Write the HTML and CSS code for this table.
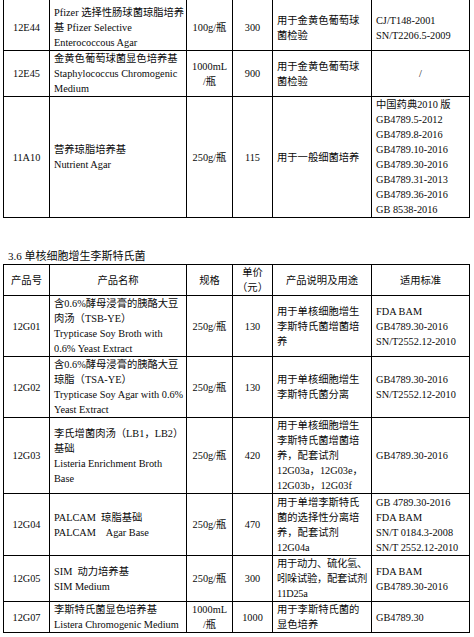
FILE: index.html
```html
<!DOCTYPE html>
<html lang="zh-CN">
<head>
<meta charset="utf-8">
<title>培养基目录</title>
<link rel="stylesheet" href="styles.css">
</head>
<body>
<div class="page">
  <table class="grid first">
    <colgroup>
      <col class="c-code"><col class="c-name"><col class="c-spec"><col class="c-price"><col class="c-desc"><col class="c-std">
    </colgroup>
    <tr class="lead">
      <td class="center">12E44</td>
      <td>Pfizer 选择性肠球菌琼脂培养<br>基 Pfizer Selective<br>Enterococcous Agar</td>
      <td class="center">100g/瓶</td>
      <td class="center">300</td>
      <td>用于金黄色葡萄球<br>菌检验</td>
      <td>CJ/T148-2001<br>SN/T2206.5-2009</td>
    </tr>
    <tr>
      <td class="center">12E45</td>
      <td>金黄色葡萄球菌显色培养基<br>Staphylococcus Chromogenic<br>Medium</td>
      <td class="center">1000mL<br>/瓶</td>
      <td class="center">900</td>
      <td>用于金黄色葡萄球<br>菌检验</td>
      <td class="center">/</td>
    </tr>
    <tr>
      <td class="center">11A10</td>
      <td>营养琼脂培养基<br>Nutrient Agar</td>
      <td class="center">250g/瓶</td>
      <td class="center">115</td>
      <td>用于一般细菌培养</td>
      <td>中国药典2010 版<br>GB4789.5-2012<br>GB4789.8-2016<br>GB4789.10-2016<br>GB4789.30-2016<br>GB4789.31-2013<br>GB4789.36-2016<br>GB 8538-2016</td>
    </tr>
  </table>

  <h2 class="section">3.6 单核细胞增生李斯特氏菌</h2>

  <table class="grid">
    <colgroup>
      <col class="c-code"><col class="c-name"><col class="c-spec"><col class="c-price"><col class="c-desc"><col class="c-std">
    </colgroup>
    <tr class="head">
      <th>产品号</th>
      <th>产品名称</th>
      <th>规格</th>
      <th>单价<br>（元）</th>
      <th>产品说明及用途</th>
      <th>适用标准</th>
    </tr>
    <tr>
      <td class="center">12G01</td>
      <td>含0.6%酵母浸膏的胰酪大豆<br>肉汤（TSB-YE）<br>Trypticase Soy Broth with<br>0.6% Yeast Extract</td>
      <td class="center">250g/瓶</td>
      <td class="center">130</td>
      <td>用于单核细胞增生<br>李斯特氏菌增菌培<br>养</td>
      <td>FDA BAM<br>GB4789.30-2016<br>SN/T2552.12-2010</td>
    </tr>
    <tr>
      <td class="center">12G02</td>
      <td>含0.6%酵母浸膏的胰酪大豆<br>琼脂（TSA-YE）<br>Trypticase Soy Agar with 0.6%<br>Yeast Extract</td>
      <td class="center">250g/瓶</td>
      <td class="center">130</td>
      <td>用于单核细胞增生<br>李斯特氏菌分离</td>
      <td>GB4789.30-2016<br>SN/T2552.12-2010</td>
    </tr>
    <tr>
      <td class="center">12G03</td>
      <td>李氏增菌肉汤（LB1，LB2）<br>基础<br>Listeria Enrichment Broth<br>Base</td>
      <td class="center">250g/瓶</td>
      <td class="center">420</td>
      <td>用于单核细胞增生<br>李斯特氏菌增菌培<br>养，配套试剂<br>12G03a，12G03e，<br>12G03b，12G03f</td>
      <td>GB4789.30-2016</td>
    </tr>
    <tr class="r-g04">
      <td class="center">12G04</td>
      <td>PALCAM&nbsp; 琼脂基础<br>PALCAM&nbsp;&nbsp;&nbsp; Agar Base</td>
      <td class="center">250g/瓶</td>
      <td class="center">470</td>
      <td>用于单增李斯特氏<br>菌的选择性分离培<br>养，配套试剂<br>12G04a</td>
      <td>GB 4789.30-2016<br>FDA BAM<br>SN/T 0184.3-2008<br>SN/T 2552.12-2010</td>
    </tr>
    <tr>
      <td class="center">12G05</td>
      <td>SIM&nbsp; 动力培养基<br>SIM Medium</td>
      <td class="center">250g/瓶</td>
      <td class="center">300</td>
      <td class="tight">用于动力、硫化氢、<br>吲哚试验，配套试剂<br>11D25a</td>
      <td>FDA BAM<br>GB4789.30-2016</td>
    </tr>
    <tr>
      <td class="center">12G07</td>
      <td>李斯特氏菌显色培养基<br>Listera Chromogenic Medium</td>
      <td class="center">1000mL<br>/瓶</td>
      <td class="center">1000</td>
      <td>用于李斯特氏菌的<br>显色培养</td>
      <td>GB4789.30</td>
    </tr>
  </table>
</div>
</body>
</html>
```

FILE: styles.css
```css
html, body {
  margin: 0;
  padding: 0;
  background: #ffffff;
}

body {
  font-family: "Liberation Serif", "Noto Sans CJK SC", serif;
  font-size: 10.3px;
  line-height: 15px;
  color: #0a0a0a;
}

.page {
  padding-left: 3px;
  width: 466px;
}

.grid {
  width: 466px;
  table-layout: fixed;
  border-collapse: collapse;
}

.grid.first {
  margin-top: -6px;
}

.c-code { width: 46px; }
.c-name { width: 137px; }
.c-spec { width: 46px; }
.c-price { width: 40px; }
.c-desc { width: 99px; }
.c-std { width: 98px; }

.grid td,
.grid th {
  border: 1px solid #000;
  padding: 0 3px 0 4px;
  vertical-align: middle;
  text-align: left;
  white-space: nowrap;
  font-weight: normal;
  overflow: visible;
}

.grid th {
  text-align: center;
  padding: 0;
}

.grid td.center {
  text-align: center;
  padding: 0;
}

.grid tr.lead td {
  padding-top: 10px;
}

.grid tr.r-g04 td {
  height: 61px;
}

.grid td.tight {
  letter-spacing: -0.3px;
}

.section {
  margin: 31px 0 0 5px;
  font-size: 11px;
  line-height: 15px;
  font-weight: normal;
}
```
